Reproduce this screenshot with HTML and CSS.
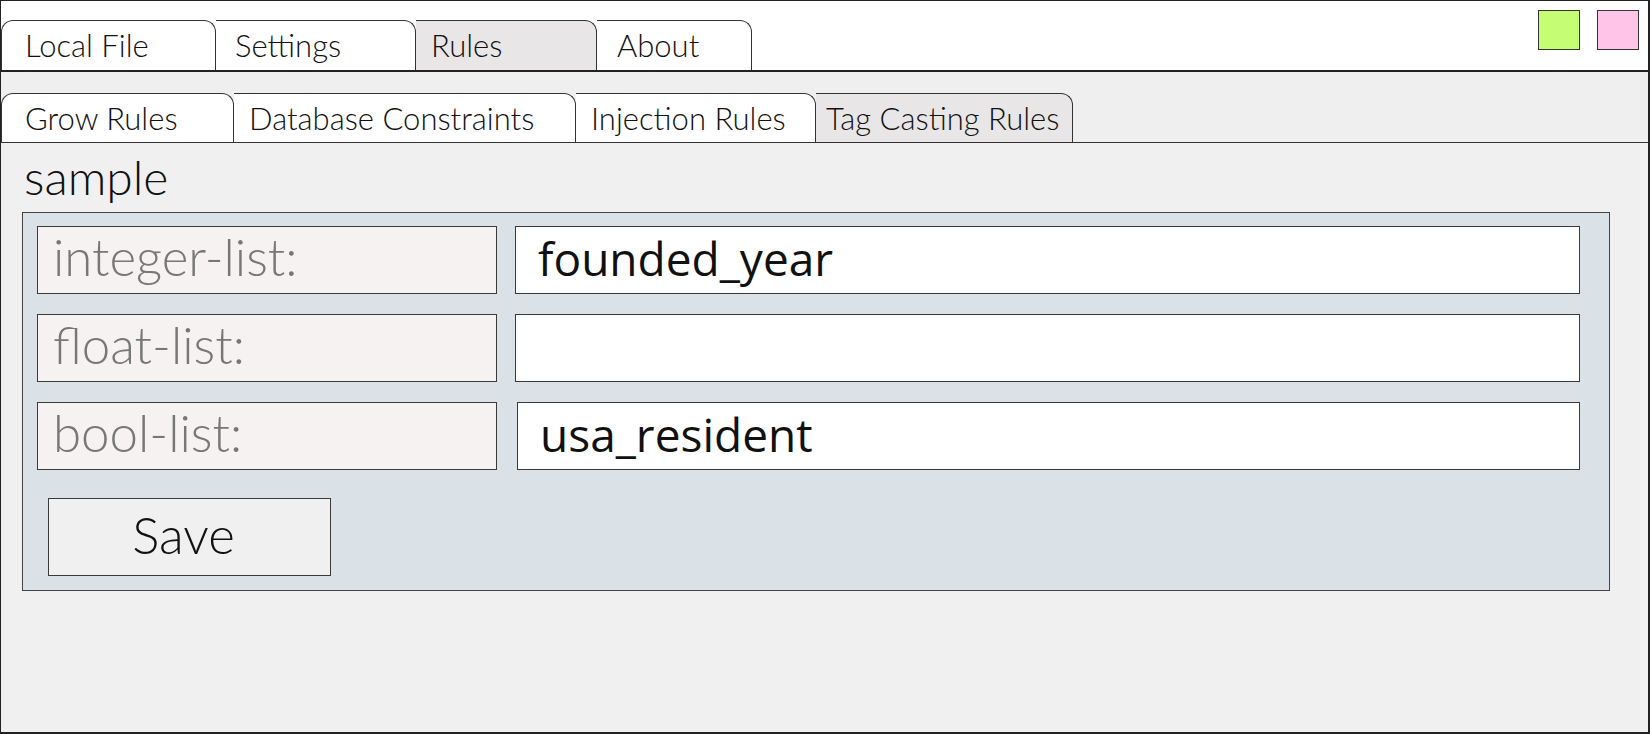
FILE: index.html
```html
<!DOCTYPE html>
<html lang="en">
<head>
<meta charset="utf-8">
<title>Rules - Tag Casting Rules</title>
<link rel="stylesheet" href="styles.css">
</head>
<body>
<div class="window">
  <header class="topbar">
    <nav class="tabs">
      <div class="tab tab--first tab--local">Local File</div>
      <div class="tab tab--settings">Settings</div>
      <div class="tab tab--active tab--rules">Rules</div>
      <div class="tab tab--about">About</div>
    </nav>
    <div class="controls">
      <span class="sq sq--green"></span>
      <span class="sq sq--pink"></span>
    </div>
  </header>
  <div class="subbar">
    <nav class="tabs">
      <div class="tab tab--first tab--grow">Grow Rules</div>
      <div class="tab tab--db">Database Constraints</div>
      <div class="tab tab--inj">Injection Rules</div>
      <div class="tab tab--active tab--tag">Tag Casting Rules</div>
    </nav>
  </div>
  <main class="content">
    <h1 class="title">sample</h1>
    <section class="panel">
      <div class="row">
        <div class="label">integer-list:</div>
        <div class="field">founded_year</div>
      </div>
      <div class="row">
        <div class="label">float-list:</div>
        <div class="field"></div>
      </div>
      <div class="row">
        <div class="label">bool-list:</div>
        <div class="field field--shift">usa_resident</div>
      </div>
      <button class="save" type="button">Save</button>
    </section>
  </main>
</div>
</body>
</html>
```
FILE: styles.css
```css
* {
  box-sizing: border-box;
}

html, body {
  margin: 0;
  padding: 0;
}

body {
  width: 1650px;
  height: 734px;
  overflow: hidden;
  font-family: "Lato", "Liberation Sans", sans-serif;
  color: #111;
}

.window {
  width: 1650px;
  height: 734px;
  border: 1px solid #222;
  border-right-width: 2px;
  border-bottom-width: 2px;
  background: #f0f0f0;
  display: flex;
  flex-direction: column;
}

/* ---------- top tab bar ---------- */
.topbar {
  height: 71px;
  background: #ffffff;
  border-bottom: 2px solid #222;
  display: flex;
  justify-content: space-between;
  align-items: flex-end;
}

.tabs {
  display: flex;
  align-items: flex-end;
}

.tab {
  height: 50px;
  display: flex;
  align-items: center;
  padding: 0 0 1px 20px;
  background: #ffffff;
  border-top: 1.3px solid #333;
  border-right: 1.3px solid #333;
  border-top-right-radius: 12px;
  font-size: 31px;
  font-weight: 300;
  color: #111;
  white-space: nowrap;
}

.tab--first {
  border-left: 1.3px solid #333;
  border-top-left-radius: 12px;
  padding-left: 23px;
}

.tab--active {
  background: #e8e6e6;
}

.tab--local { width: 215px; }
.tab--settings { width: 200px; padding-left: 19px; }
.tab--rules { width: 181px; padding-left: 15px; }
.tab--about { width: 155px; }

.controls {
  align-self: flex-start;
  display: flex;
  gap: 17px;
  margin-top: 9px;
  margin-right: 9px;
}

.sq {
  display: block;
  width: 42px;
  height: 40px;
  border: 1.5px solid #333;
}

.sq--green {
  background: #c5fd74;
}

.sq--pink {
  background: #ffc4e8;
}

/* ---------- sub tab bar ---------- */
.subbar {
  height: 71px;
  background: #efefef;
  border-bottom: 1.5px solid #333;
  display: flex;
  align-items: flex-end;
}

.subbar .tab {
  height: 49px;
}

.tab--grow { width: 233px; }
.tab--db { width: 342px; padding-left: 15px; }
.tab--inj { width: 240px; padding-left: 15px; }
.tab--tag { width: 257px; padding-left: 10px; }

/* ---------- content ---------- */
.content {
  flex: 1;
  padding: 6px 38px 0 21px;
}

.title {
  margin: 0 0 7px 2px;
  font-size: 48px;
  font-weight: 300;
  line-height: 56px;
  color: #111;
}

.panel {
  background: #dae1e7;
  border: 1px solid #444;
  padding: 13px 29px 14px 14px;
  display: flex;
  flex-direction: column;
  gap: 20px;
}

.row {
  display: flex;
  gap: 18px;
  height: 68px;
}

.label {
  width: 460px;
  flex: none;
  background: #f5f2f1;
  border: 1px solid #3a3a3a;
  display: flex;
  align-items: center;
  padding: 0 0 7px 15px;
  font-size: 51px;
  font-weight: 300;
  color: #777;
  white-space: nowrap;
}

.field {
  flex: 1;
  background: #ffffff;
  border: 1px solid #3a3a3a;
  display: flex;
  align-items: center;
  padding: 0 0 5px 22px;
  font-family: "Open Sans", "Liberation Sans", sans-serif;
  font-size: 46px;
  color: #111;
  white-space: nowrap;
}

.field--shift {
  margin-left: 2px;
}

.save {
  margin: 8px 0 0 11px;
  width: 283px;
  height: 78px;
  background: #f0f0f0;
  border: 1px solid #3a3a3a;
  border-radius: 0;
  padding: 0 12px 5px 0;
  font-family: "Lato", "Liberation Sans", sans-serif;
  font-size: 51px;
  font-weight: 300;
  color: #111;
  cursor: pointer;
}
```
